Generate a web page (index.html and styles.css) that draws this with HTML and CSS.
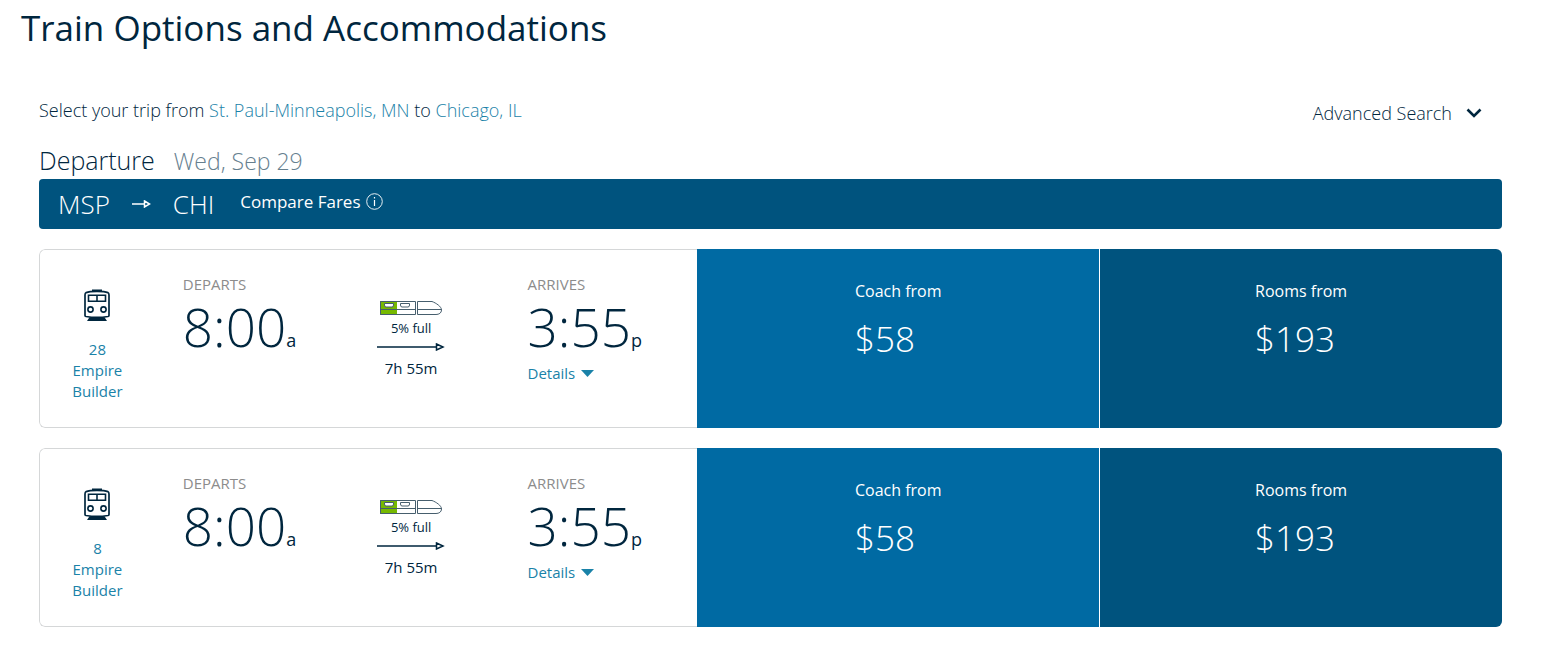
FILE: index.html
```html
<!DOCTYPE html>
<html lang="en">
<head>
<meta charset="utf-8">
<title>Train Options and Accommodations</title>
<link rel="stylesheet" href="styles.css">
</head>
<body>
<svg class="defs" aria-hidden="true">
  <symbol id="train" viewBox="0 0 26 32">
    <path d="M2.200 3.600C6 2 20 2 23.800 3.600Q25 4.200 25 6V26.500Q25 27.300 24 27.500C17 28.600 9 28.600 2 27.500Q1 27.300 1 26.500V6Q1 4.200 2.200 3.600Z" fill="none" stroke="#00263e" stroke-width="1.700"/>
    <path d="M8 0.500H18V2.500H8ZM5.500 28.200H20.500L23 32H3Z" fill="#00263e"/>
    <path d="M4.500 6.200H21.500V12.300H4.500ZM13 6.200V12.300" fill="none" stroke="#00263e" stroke-width="1.600"/>
    <circle cx="6.500" cy="20.500" r="2.600" fill="none" stroke="#00263e" stroke-width="1.600"/>
    <circle cx="19.500" cy="20.500" r="2.600" fill="none" stroke="#00263e" stroke-width="1.600"/>
  </symbol>
  <symbol id="capacity" viewBox="0 0 62 14">
    <path d="M0 0H17V14H0Z" fill="#76b900"/>
    <path d="M0.500 0.500H35.500V13.500H0.500ZM0.500 8.500H35.500" fill="none" stroke="#465e6d"/>
    <path d="M37.500 0.500H52C56 2 61.500 5.500 61.500 9C61.500 12 59 13.500 56 13.500H37.500ZM37.500 8.500H61.500" fill="none" stroke="#465e6d"/>
    <path d="M4.500 2.500H13.500V4Q13.500 6 12 6H6Q4.500 6 4.500 4ZM20.500 2.500H29.500V4Q29.500 6 28 6H22Q20.500 6 20.500 4Z" fill="#fff" stroke="#465e6d"/>
  </symbol>
  <symbol id="long-arrow" viewBox="0 0 68 8">
    <path d="M0 4H59M59.500 1L66 4L59.500 7Z" fill="none" stroke="#00263e" stroke-width="1.500"/>
  </symbol>
</svg>
<main class="page">
  <h1 class="title">Train Options and Accommodations</h1>
  <div class="content">
    <div class="toolbar">
      <p class="trip">Select your trip from <a href="#origin">St. Paul-Minneapolis, MN</a> to <a href="#destination">Chicago, IL</a></p>
      <button class="advanced" type="button">Advanced Search
        <svg width="16" height="10" viewBox="0 0 16 10" aria-hidden="true"><path d="M1.500 1.500L8 8L14.500 1.500" fill="none" stroke="#00263e" stroke-width="2.600"/></svg>
      </button>
    </div>
    <h2 class="departure">Departure <span class="date">Wed, Sep 29</span></h2>
    <div class="route">
      <span class="station">MSP</span>
      <svg class="route-arrow" width="19" height="8" viewBox="0 0 19 8" aria-hidden="true"><path d="M0 4H12M12.500 1L17.500 4L12.500 7Z" fill="none" stroke="#fff" stroke-width="1.500"/></svg>
      <span class="station">CHI</span>
      <button class="compare" type="button">Compare Fares
        <svg width="17" height="17" viewBox="0 0 17 17" aria-hidden="true"><circle cx="8.500" cy="8.500" r="7.800" fill="none" stroke="#fff" stroke-width="0.900"/><path d="M8.500 7V13M8.500 4V5.600" stroke="#fff" stroke-width="1.200"/></svg>
      </button>
    </div>

    <article class="card">
      <div class="trip-info">
        <div class="train">
          <svg width="26" height="32" aria-hidden="true"><use href="#train"/></svg>
          <a href="#train-28">28<br>Empire<br>Builder</a>
        </div>
        <div class="stop">
          <div class="label">DEPARTS</div>
          <div class="time">8:00<span class="meridiem">a</span></div>
        </div>
        <div class="ride">
          <svg width="62" height="14" aria-hidden="true"><use href="#capacity"/></svg>
          <div class="full">5% full</div>
          <svg class="ride-arrow" width="68" height="8" aria-hidden="true"><use href="#long-arrow"/></svg>
          <div class="duration">7h 55m</div>
        </div>
        <div class="stop arrival">
          <div class="label">ARRIVES</div>
          <div class="time">3:55<span class="meridiem">p</span></div>
          <button class="details" type="button">Details <svg width="13" height="7" viewBox="0 0 13 7" aria-hidden="true"><path d="M0 0H13L6.500 7Z" fill="#1a82a8"/></svg></button>
        </div>
      </div>
      <button class="fare coach" type="button"><span class="fare-text"><span class="fare-label">Coach from</span><span class="price">$58</span></span></button>
      <button class="fare rooms" type="button"><span class="fare-text"><span class="fare-label">Rooms from</span><span class="price">$193</span></span></button>
    </article>

    <article class="card">
      <div class="trip-info">
        <div class="train">
          <svg width="26" height="32" aria-hidden="true"><use href="#train"/></svg>
          <a href="#train-8">8<br>Empire<br>Builder</a>
        </div>
        <div class="stop">
          <div class="label">DEPARTS</div>
          <div class="time">8:00<span class="meridiem">a</span></div>
        </div>
        <div class="ride">
          <svg width="62" height="14" aria-hidden="true"><use href="#capacity"/></svg>
          <div class="full">5% full</div>
          <svg class="ride-arrow" width="68" height="8" aria-hidden="true"><use href="#long-arrow"/></svg>
          <div class="duration">7h 55m</div>
        </div>
        <div class="stop arrival">
          <div class="label">ARRIVES</div>
          <div class="time">3:55<span class="meridiem">p</span></div>
          <button class="details" type="button">Details <svg width="13" height="7" viewBox="0 0 13 7" aria-hidden="true"><path d="M0 0H13L6.500 7Z" fill="#1a82a8"/></svg></button>
        </div>
      </div>
      <button class="fare coach" type="button"><span class="fare-text"><span class="fare-label">Coach from</span><span class="price">$58</span></span></button>
      <button class="fare rooms" type="button"><span class="fare-text"><span class="fare-label">Rooms from</span><span class="price">$193</span></span></button>
    </article>
  </div>
</main>
</body>
</html>
```

FILE: styles.css
```css
* {
  box-sizing: border-box;
}

body {
  margin: 0;
  background: #fff;
  color: #00263e;
  font-family: "Open Sans", sans-serif;
  font-size: 18px;
}

a {
  color: #1a82a8;
  text-decoration: none;
}

button {
  padding: 0;
  border: 0;
  background: none;
  color: inherit;
  font: inherit;
  cursor: pointer;
}

svg {
  display: block;
  flex: none;
}

.defs {
  display: none;
}

.page {
  padding: 3px 45px 20px 39px;
}

.title {
  margin: 0 0 45px -18px;
  font-size: 35px;
  font-weight: 400;
  line-height: 50px;
}

.toolbar {
  display: flex;
  justify-content: space-between;
  align-items: flex-start;
  height: 45px;
}

.trip {
  margin: 0;
  font-weight: 340;
  line-height: 24px;
}

.advanced {
  display: flex;
  align-items: center;
  gap: 14px;
  margin: 3px 20px 0 0;
  font-weight: 340;
  line-height: 24px;
}

.departure {
  display: flex;
  align-items: baseline;
  gap: 19px;
  height: 36px;
  margin: 0;
  font-size: 25px;
  font-weight: 300;
  line-height: 34px;
}

.date {
  color: #66808f;
  font-size: 23px;
}

.route {
  display: flex;
  align-items: center;
  height: 50px;
  margin-bottom: 20px;
  padding: 0 19px;
  border-radius: 4px;
  background: #00537e;
  color: #fff;
}

.station {
  font-size: 26px;
  font-weight: 300;
}

.route-arrow {
  margin: 0 22px;
}

.compare {
  display: flex;
  align-items: center;
  gap: 6px;
  margin: 0 0 5px 26px;
  font-size: 17px;
}

.card {
  display: grid;
  grid-template-columns: 45% 402fr 403fr;
  min-height: 179px;
  margin-bottom: 20px;
  border-radius: 6px;
  overflow: hidden;
}

.trip-info {
  display: grid;
  grid-template-columns: 143fr 158fr 141fr 216fr;
  border: 1px solid #d5d7d8;
  border-right: 0;
  border-radius: 6px 0 0 6px;
}

.train {
  display: flex;
  flex-direction: column;
  align-items: center;
  gap: 18px;
  padding: 39px 28px 0 0;
  font-size: 15px;
  line-height: 21px;
  text-align: center;
}

.stop {
  padding-top: 24px;
}

.arrival {
  padding-left: 46px;
}

.label {
  color: #8c8c8c;
  font-size: 15px;
  line-height: 21px;
}

.time {
  height: 68px;
  font-size: 53px;
  font-weight: 300;
  line-height: 64px;
}

.meridiem {
  font-size: 18px;
  font-weight: 400;
  line-height: 1;
}

.details {
  display: flex;
  align-items: center;
  gap: 6px;
  color: #1a82a8;
  font-size: 15px;
  line-height: 21px;
}

.ride {
  display: flex;
  flex-direction: column;
  align-items: center;
  padding-top: 51px;
}

.full {
  margin-top: 4px;
  font-size: 13px;
  line-height: 18px;
}

.ride-arrow {
  margin: 6px 0 7px;
}

.duration {
  font-size: 15px;
  line-height: 21px;
}

.fare {
  display: flex;
  justify-content: center;
  align-items: flex-start;
  padding-top: 30px;
  color: #fff;
  text-align: left;
}

.coach {
  background: #006aa3;
}

.rooms {
  border-left: 1px solid #fff;
  background: #00537e;
}

.fare-text {
  display: flex;
  flex-direction: column;
  gap: 12px;
}

.fare-label {
  font-size: 16px;
  line-height: 24px;
}

.price {
  font-size: 35px;
  font-weight: 300;
  line-height: 48px;
}
```
